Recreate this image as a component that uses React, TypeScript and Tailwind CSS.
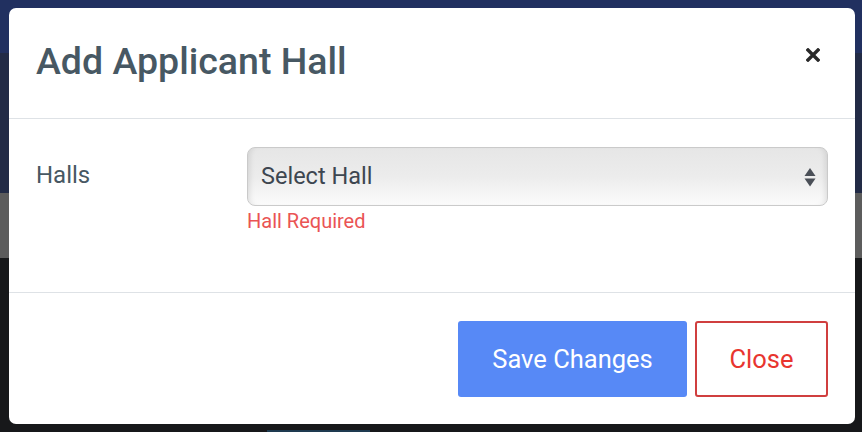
import React from "react";

export default function App() {
  return (
    <div
      className="relative w-[862px] h-[432px] overflow-hidden flex flex-col"
      style={{ fontFamily: "Roboto, 'Noto Sans', sans-serif" }}
    >
      <div className="h-[53px] bg-[#213060]" />
      <div className="h-[140px] bg-[#222b46]" />
      <div className="h-[65px] bg-[#5c5c5c]" />
      <div className="flex-1 bg-[#17181a] flex flex-col justify-end">
        <div className="ml-[267px] w-[103px] h-[2px] bg-[#1e3a50]" />
      </div>

      <div className="absolute left-[9px] top-[8px] w-[846px] h-[416px] bg-white rounded-[7px] flex flex-col">
        <div className="h-[111px] flex items-start justify-between pl-[27px] pr-[35px] border-b border-[#dee2e6]">
          <h1 className="text-[37.5px] font-medium text-[#475863] leading-none mt-[35px]">
            Add Applicant Hall
          </h1>
          <svg width="14" height="14" viewBox="0 0 14 14" className="mt-[40px]">
            <path d="M2 2 L12 12 M12 2 L2 12" stroke="#2a2a2a" strokeWidth="3.4" strokeLinecap="square" />
          </svg>
        </div>

        <div className="h-[174px] flex items-start pl-[27px] pr-[27px] pt-[28px] border-b border-[#dee2e6]">
          <div className="w-[211px] text-[24px] text-[#475863] pt-[16px] leading-none">Halls</div>
          <div className="flex-1 flex flex-col">
            <div
              className="h-[59px] rounded-[8px] border border-[#cacaca] flex items-center justify-between pl-[13px] pr-[11px]"
              style={{
                background: "linear-gradient(to bottom, #e6e6e6 0%, #ececec 50%, #fbfbfb 100%)",
                boxShadow: "inset 6px 0 6px -5px rgba(0,0,0,0.12), inset -6px 0 6px -5px rgba(0,0,0,0.12)",
              }}
            >
              <span className="text-[23.5px] text-[#3d4650]">Select Hall</span>
              <svg width="12" height="22" viewBox="0 0 12 22">
                <path d="M6 2 L11.5 10 L0.5 10 Z" fill="#4a4f57" />
                <path d="M0.5 12.5 L11.5 12.5 L6 20.5 Z" fill="#4a4f57" />
              </svg>
            </div>
            <div className="text-[20px] text-[#ea5454] mt-[5px] leading-none">Hall Required</div>
          </div>
        </div>

        <div className="flex-1 flex items-start justify-end gap-[8px] pr-[27px] pt-[28px]">
          <button className="w-[229px] h-[76px] rounded-[3px] bg-[#5789f6] text-white text-[25.5px]">
            Save Changes
          </button>
          <button className="w-[133px] h-[76px] rounded-[3px] border-2 border-[#d03f3f] text-[#e8352f] text-[25.5px] bg-white">
            Close
          </button>
        </div>
      </div>
    </div>
  );
}
